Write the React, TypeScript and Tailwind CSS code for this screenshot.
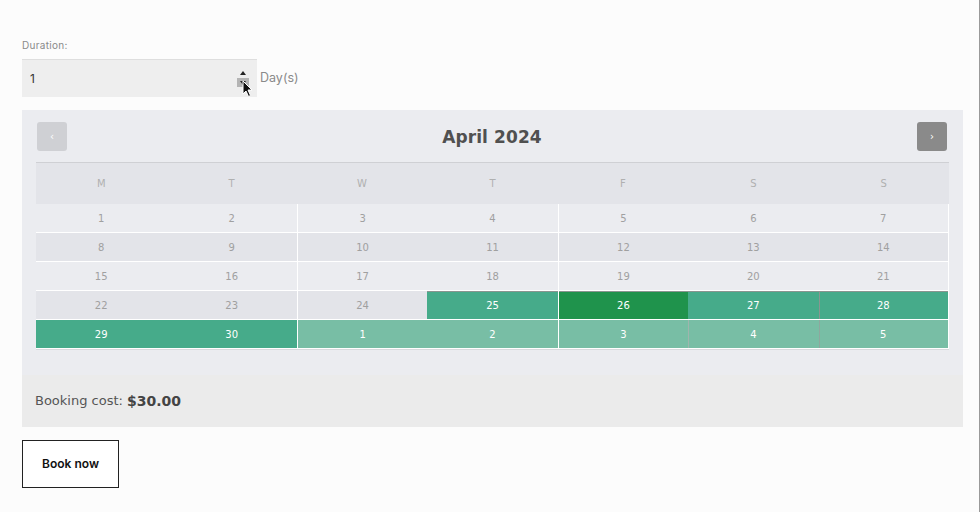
const days = ['M', 'T', 'W', 'T', 'F', 'S', 'S'];

type Cell = { n: number; kind: 'plain' | 'booked' | 'selected' | 'next' };

const rows: Cell[][] = [
  [1, 2, 3, 4, 5, 6, 7].map((n) => ({ n, kind: 'plain' as const })),
  [8, 9, 10, 11, 12, 13, 14].map((n) => ({ n, kind: 'plain' as const })),
  [15, 16, 17, 18, 19, 20, 21].map((n) => ({ n, kind: 'plain' as const })),
  [
    { n: 22, kind: 'plain' },
    { n: 23, kind: 'plain' },
    { n: 24, kind: 'plain' },
    { n: 25, kind: 'booked' },
    { n: 26, kind: 'selected' },
    { n: 27, kind: 'booked' },
    { n: 28, kind: 'booked' },
  ],
  [
    { n: 29, kind: 'booked' },
    { n: 30, kind: 'booked' },
    { n: 1, kind: 'next' },
    { n: 2, kind: 'next' },
    { n: 3, kind: 'next' },
    { n: 4, kind: 'next' },
    { n: 5, kind: 'next' },
  ],
];

const cellBg = (kind: Cell['kind'], row: number) => {
  if (kind === 'booked') return 'bg-[#46ab8a] text-white';
  if (kind === 'selected') return 'bg-[#1f934c] text-white';
  if (kind === 'next') return 'bg-[#78bea5] text-white';
  return row % 2 === 0 ? 'bg-[#ebecf0] text-[#a0a0a0]' : 'bg-[#e3e4e9] text-[#a0a0a0]';
};

const Calendar = () => (
  <div className="bg-[#ebecf0] px-[14px] pt-[12px] pb-[26px]">
    <div className="flex items-center justify-between pl-[1px] pr-[2px]">
      <button className="w-[30px] h-[29px] rounded-[3px] bg-[#cfd0d4] text-white text-[10px] flex items-center justify-center">
        ‹
      </button>
      <h2 className="mt-[2px] text-[17px] font-bold text-[#505050] tracking-[0.1px]">April 2024</h2>
      <button className="w-[30px] h-[29px] rounded-[3px] bg-[#8a8a8a] text-white text-[10px] flex items-center justify-center">
        ›
      </button>
    </div>
    <div className="mt-[11px] w-[913px] border-t border-[#cfd0d4] shadow-[0_1px_0_#d9dadd]">
      <div className="grid grid-cols-7 bg-[#e3e4e9] h-[41px] items-center">
        {days.map((d, i) => (
          <div key={i} className="text-center text-[10px] text-[#b0b0b0]">
            {d}
          </div>
        ))}
      </div>
      {rows.map((row, r) => (
        <div key={r} className="grid grid-cols-7 border-b border-white">
          {row.map((c, i) => {
            const lines = [
              i === 2 || i === 4 ? 'border-l border-white' : '',
              i === 6 ? 'border-r border-white' : '',
              i === 6 && c.kind !== 'plain' ? 'shadow-[inset_1px_0_0_#8fa79e]' : '',
              i === 5 && c.kind === 'next' ? 'shadow-[inset_1px_0_0_#9fb5ad]' : '',
              r === 3 && c.kind !== 'plain' && i !== 6 ? 'shadow-[inset_0_1px_0_#8a9590]' : '',
              r === 3 && i === 6 ? 'shadow-[inset_1px_1px_0_#8a9590]' : '',
            ].join(' ');
            return (
              <div
                key={i}
                className={`h-[28px] flex items-center justify-center text-[10px] ${cellBg(c.kind, r)} ${lines}`}
              >
                {c.n}
              </div>
            );
          })}
        </div>
      ))}
    </div>
  </div>
);

const App = () => {
  return (
    <div
      className="min-h-screen bg-[#fcfcfc] border-r border-[#9a9a9a]"
      style={{ fontFamily: '"DejaVu Sans", sans-serif' }}
    >
      <div className="pl-[22px] pr-[16px] pt-[38px] pb-[24px]">
        <label
          className="block text-[10px] text-[#8a8a8a] tracking-[0.3px] leading-[14px]"
          style={{ fontFamily: 'Inter, sans-serif' }}
        >
          Duration:
        </label>
        <div className="mt-[7px] flex items-center">
          <div className="relative w-[235px] h-[38px] bg-[#eeeeee] border-t border-[#dedede] flex items-center pl-[8px]">
            <span className="text-[12px] text-[#333]" style={{ fontFamily: 'Inter, sans-serif' }}>
              1
            </span>
            <div className="absolute left-[215px] top-[9px] flex flex-col items-center w-[12px]">
              <svg width="8" height="6" viewBox="0 0 8 6" className="mt-[1px]">
                <path d="M4 1 L7 5 L1 5 Z" fill="#222" />
              </svg>
              <div className="mt-[2px] w-[12px] h-[9px] bg-[#b4b4b4] flex items-center justify-center">
                <svg width="8" height="6" viewBox="0 0 8 6">
                  <path d="M1 1 L7 1 L4 5 Z" fill="#222" />
                </svg>
              </div>
            </div>
            <svg
              className="absolute left-[220px] top-[20px]"
              width="12"
              height="18"
              viewBox="0 0 12 18"
            >
              <path d="M1 1 L1 14 L4 11 L6.5 16.5 L8.5 15.5 L6 10 L10 10 Z" fill="#111" stroke="#fff" strokeWidth="1" />
            </svg>
          </div>
          <span
            className="ml-[3px] text-[12.5px] text-[#8a8a8a]"
            style={{ fontFamily: 'Inter, sans-serif' }}
          >
            Day(s)
          </span>
        </div>

        <div className="mt-[13px] w-[941px]">
          <Calendar />
          <div className="bg-[#ebebeb] h-[52px] flex items-center pl-[13px]">
            <span className="text-[13px] text-[#555]">Booking cost: </span>
            <span className="ml-[4px] text-[14px] font-bold text-[#444]">$30.00</span>
          </div>
        </div>

        <button
          className="mt-[13px] w-[97px] h-[48px] border-[1.5px] border-[#222] bg-white text-[12px] font-semibold text-[#111] flex items-center justify-center"
          style={{ fontFamily: 'Inter, sans-serif' }}
        >
          Book now
        </button>
      </div>
    </div>
  );
};

export default App;
